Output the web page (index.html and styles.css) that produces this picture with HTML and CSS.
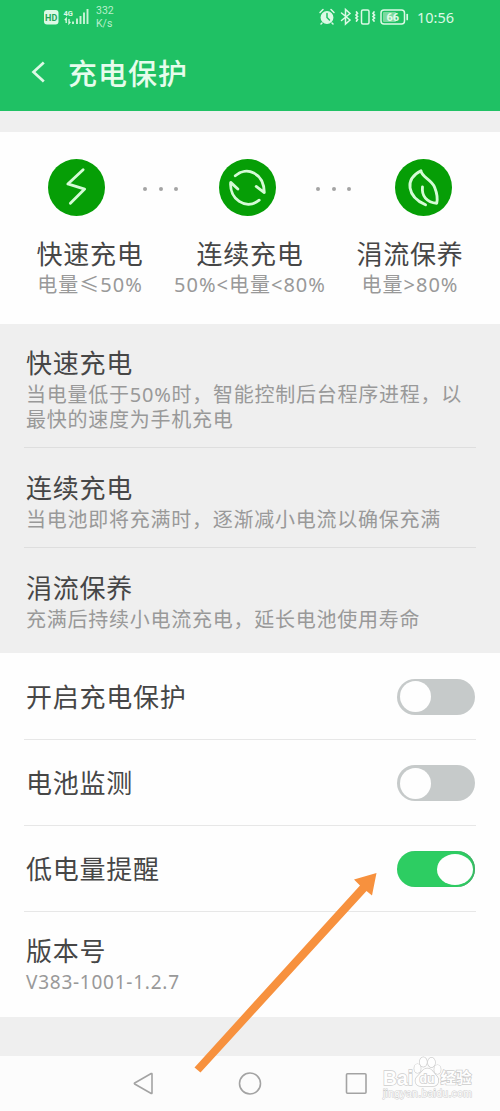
FILE: index.html
```html
<!DOCTYPE html>
<html lang="zh-CN">
<head>
<meta charset="utf-8">
<title>充电保护</title>
<link rel="stylesheet" href="styles.css">
</head>
<body>
<main class="phone">
  <header class="header">
    <div class="status">
      <svg class="status-left" width="48" height="20" viewBox="0 0 48 20">
        <rect x="1" y="3" width="14.500" height="14.500" rx="3" fill="#dcf9e5"/>
        <text x="8.200" y="13.800" class="hd" text-anchor="middle">HD</text>
        <text x="20.500" y="8.800" class="gen">4G</text>
        <path d="M23.200 16v-4.500l-1.400 1.700M26 12v4.500l1.400-1.700" stroke="#dcf9e5" stroke-width="1.300" fill="none"/>
        <path d="M30 14.500v2.500M34 11.500v5.500M37.500 9v8M41 5.500v11.500M44.500 2v15" stroke="#c9f3d7" stroke-width="1.900" fill="none"/>
      </svg>
      <div class="speed"><span>332</span><span>K/s</span></div>
      <svg class="status-right" width="92" height="20" viewBox="0 0 92 20">
        <g fill="none" stroke="#dcf9e5" stroke-width="1.500" stroke-linecap="round">
          <circle cx="9" cy="10.500" r="5.700" fill="#dcf9e5"/>
          <path d="M2 5.500l3-3M13 2.500l3 3M4 16l-1 1M14 16l1 1"/>
          <path d="M9 6.500v4l2.500 2.500" stroke="#1fc164"/>
          <path d="M23.500 6l8.500 7-4.500 4V2.500l4.500 4-8.500 7"/>
          <rect x="43.500" y="3" width="7.500" height="14" rx="1.500"/>
          <path d="M38.500 5l1 1.500-1.500 1.500 1.500 1.500-1.500 1.500 1.500 1.500-1 1.500M56 5l-1 1.500 1.500 1.500-1.500 1.500 1.500 1.500-1.500 1.500 1 1.500" stroke-width="1.700"/>
          <rect x="63" y="3" width="23.500" height="14" rx="3"/>
          <path d="M89.200 7.500v5" stroke-width="1.700"/>
        </g>
        <rect x="65" y="5" width="13" height="10" rx="1" fill="#7cd99f"/>
        <text x="74.800" y="14" class="battery" text-anchor="middle">66</text>
      </svg>
      <span class="clock">10:56</span>
    </div>
    <div class="titlebar">
      <svg class="back" width="14" height="24" viewBox="0 0 14 24"><path d="M12.800 2.500L2.500 12l10.300 9.500" fill="none" stroke="#dcf9e5" stroke-width="2.700"/></svg>
      <h1>充电保护</h1>
    </div>
  </header>

  <section class="stages">
    <div class="stage-icons">
      <svg class="disc" viewBox="0 0 56 56"><circle cx="28" cy="28" r="28"/><path d="M34.500 10.500L19.500 24.500 36 29.500 22 43.500"/></svg>
      <div class="dots"><i></i><i></i><i></i></div>
      <svg class="disc" viewBox="0 0 56 56"><circle cx="28" cy="28" r="28"/><path d="M16 16.500C27 7 44 13 44.500 33L36.500 27M18.500 29.500L11.500 23C10 39 26 51 39.500 40.500"/></svg>
      <div class="dots"><i></i><i></i><i></i></div>
      <svg class="disc" viewBox="0 0 56 56"><circle cx="28" cy="28" r="28"/><path d="M30 45C12 37 9 20 25.500 11.500C26 18 36 20 39 28C41 33 42 39 41 43.500C31 43 26 36 27 27.500"/></svg>
    </div>
    <div class="stage-labels">
      <div><h2>快速充电</h2><p>电量≤50%</p></div>
      <div><h2>连续充电</h2><p>50%&lt;电量&lt;80%</p></div>
      <div><h2>涓流保养</h2><p>电量&gt;80%</p></div>
    </div>
  </section>

  <section class="details">
    <article class="detail first"><h2>快速充电</h2><p>当电量低于50%时，智能控制后台程序进程，以<br>最快的速度为手机充电</p></article>
    <article class="detail second"><h2>连续充电</h2><p>当电池即将充满时，逐渐减小电流以确保充满</p></article>
    <article class="detail third"><h2>涓流保养</h2><p>充满后持续小电流充电，延长电池使用寿命</p></article>
  </section>

  <section class="settings">
    <div class="row"><h2>开启充电保护</h2><span class="switch"></span></div>
    <div class="row"><h2>电池监测</h2><span class="switch"></span></div>
    <div class="row"><h2>低电量提醒</h2><span class="switch on"></span></div>
    <div class="version"><h2>版本号</h2><p>V383-1001-1.2.7</p></div>
  </section>

  <nav class="nav">
    <svg width="22" height="24" viewBox="0 0 22 24"><path d="M20 2v19q0 .7-.8.400L2.700 12q-.7-.5 0-1L19.200 1.600q.8-.3.800.4z"/></svg>
    <svg width="24" height="24" viewBox="0 0 24 24"><circle cx="12" cy="11.500" r="10.500"/></svg>
    <svg width="22" height="22" viewBox="0 0 22 22"><rect x="1.500" y=".8" width="19.500" height="19.500" rx="1"/></svg>
  </nav>

  <svg class="watermark" width="96" height="46" viewBox="0 0 96 46">
    <g class="mark">
      <text x="2" y="29.500" class="brand" textLength="30" lengthAdjust="spacingAndGlyphs">Bai</text>
      <ellipse cx="36.500" cy="13.500" rx="3.200" ry="4.400"/>
      <ellipse cx="42.300" cy="7" rx="3.600" ry="4.700"/>
      <ellipse cx="50.500" cy="7.500" rx="3.600" ry="4.700"/>
      <ellipse cx="56.500" cy="14.500" rx="3.200" ry="4.400"/>
      <path d="M46.500 13.500c4.500 0 6 4.500 9 7.500s2.500 10-3.500 10h-12c-6 0-7-6.500-3.500-9.500s5-8 10-8z"/>
      <text x="38.500" y="28" class="du" textLength="15" lengthAdjust="spacingAndGlyphs">du</text>
      <text x="59.500" y="27.500" class="cn" textLength="31" lengthAdjust="spacingAndGlyphs">经验</text>
      <text x="2" y="41.500" class="url" textLength="89">jingyan.baidu.com</text>
    </g>
  </svg>
  <svg class="arrow" width="190" height="206" viewBox="0 0 190 206"><path d="M3.500 197.500L169 15.500 163 9.500 185.500 3 181 25.500 175.500 21 9.500 202.500z"/></svg>
</main>
</body>
</html>
```
FILE: styles.css
```css
* { box-sizing: border-box; }
body {
  margin: 0;
  font-family: "Noto Sans", "Noto Sans CJK SC", sans-serif;
}
h1, h2, p { margin: 0; font-weight: 400; white-space: nowrap; }
svg { display: block; flex: none; }
.phone {
  position: relative;
  width: 500px;
  height: 1111px;
  overflow: hidden;
  background: #efefef;
  display: flex;
  flex-direction: column;
}
.header { height: 111px; background: #1fc164; color: #dcf9e5; flex: none; }
.status { height: 34px; display: flex; padding: 7px 44px 0 43px; }
.hd { font: 700 9px "Roboto", sans-serif; fill: #1fa557; }
.gen { font: 700 7.5px "Roboto", sans-serif; fill: #dcf9e5; }
.speed {
  display: flex;
  flex-direction: column;
  margin: -3px 0 0 5px;
  font: 10.5px/13px "Roboto", sans-serif;
  color: #b9efcc;
}
.status-right { margin-left: auto; }
.battery { font: 700 11px "Roboto", sans-serif; fill: #e2fbe9; }
.clock { width: 39px; margin-left: 7px; font-size: 14.5px; line-height: 21px; white-space: nowrap; }
.titlebar { display: flex; padding: 26px 0 0 31px; }
.titlebar h1 { margin: -7px 0 0 23px; font-size: 29px; line-height: 42px; font-weight: 500; letter-spacing: 1px; color: #e6fcec; }
.stages { height: 192px; margin-top: 21px; padding-top: 27px; background: #fefefe; flex: none; }
.stage-icons { display: flex; align-items: center; padding-left: 48px; }
.disc { width: 57px; height: 57px; }
.disc circle { fill: #069e06; }
.disc path { fill: none; stroke: #d5fbd6; stroke-width: 2.8; stroke-linecap: round; stroke-linejoin: round; }
.dots { width: 35px; margin: 3px 41px 0 38px; display: flex; justify-content: space-between; }
.dots + .disc ~ .dots { margin: 3px 44px 0 40px; }
.dots i { width: 4px; height: 4px; border-radius: 50%; background: #a4a4a4; }
.stage-labels { display: grid; grid-template-columns: repeat(3, 160px); padding: 20px 10px 0; text-align: center; }
h2 { font-size: 26px; line-height: 36px; letter-spacing: .75px; color: #464646; }
p { font-size: 20px; line-height: 26px; letter-spacing: .75px; color: #999; }
.stage-labels p { letter-spacing: 1px; }
.details { height: 329px; padding: 0 24px; flex: none; }
.detail { padding-left: 2px; border-bottom: 1px solid #dedede; }
.detail p { padding-top: 1px; line-height: 25px; }
.first { height: 124px; padding-top: 21px; }
.second { height: 100px; padding-top: 22px; }
.third { border: 0; padding-top: 22px; }
.settings { height: 364px; background: #fefefe; padding: 0 24px; flex: none; }
.row {
  height: 86px;
  padding: 1px 1px 0 2px;
  display: flex;
  justify-content: space-between;
  align-items: center;
  border-bottom: 1px solid #e7e7e7;
}
.row:first-child { height: 87px; }
.switch { width: 78px; height: 36px; border-radius: 18px; background: #c6caca; padding: 2.5px; display: flex; }
.switch::before { content: ""; width: 31px; height: 31px; border-radius: 50%; background: #fefefe; }
.on { background: #2dcd62; justify-content: flex-end; box-shadow: inset -1px 0 1px #48a468; }
.on::before { width: 36px; }
.version { padding: 21px 0 0 2px; }
.version p { font-size: 19px; line-height: 27px; letter-spacing: .75px; }
.nav {
  margin-top: 39px;
  height: 55px;
  padding: 0 133px 0 132px;
  background: #fcfcfc;
  display: flex;
  align-items: center;
  justify-content: space-between;
  flex: none;
}
.nav path, .nav circle, .nav rect { fill: none; stroke: #a3a3a3; stroke-width: 1.6; }
.watermark { position: absolute; left: 381px; top: 1055px; }
.mark { fill: #fefefe; stroke: #cdcdcd; stroke-width: 1.4; paint-order: stroke; }
.brand { font: 700 20px "Liberation Sans", sans-serif; }
.du { font: 700 12px "Liberation Sans", sans-serif; }
.cn { font: 700 15px "Noto Sans CJK SC", sans-serif; }
.url { font: 10.5px "Liberation Sans", sans-serif; stroke-width: 1; }
.arrow { position: absolute; left: 191px; top: 870px; fill: #f7913e; }
```
